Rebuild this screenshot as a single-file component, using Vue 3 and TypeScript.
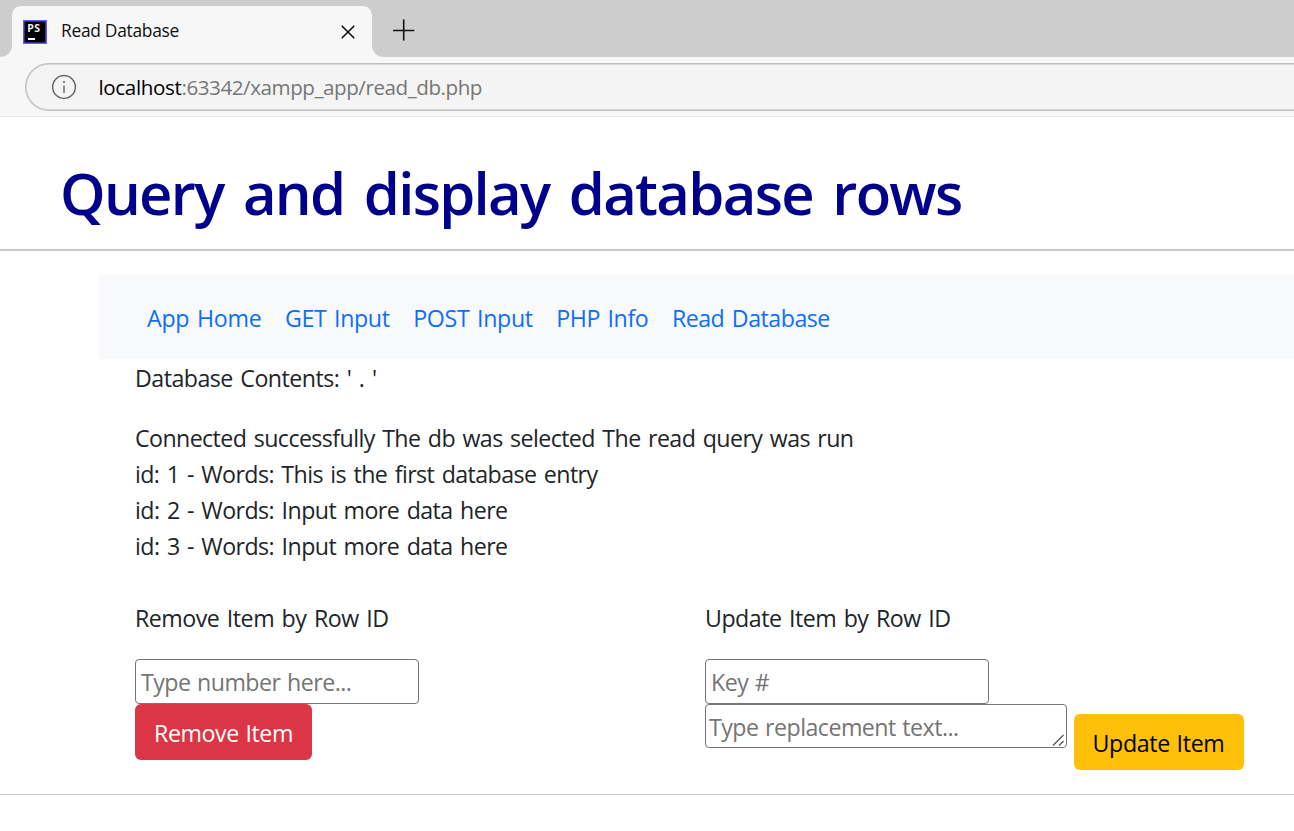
<script setup lang="ts">
import type { Directive } from 'vue'

// Spreads a line of text over a given width by adjusting its tracking.
const vFit: Directive<HTMLElement, number> = {
  mounted(el, { value }) {
    const n = (el.textContent ?? '').length
    const natural = el.getBoundingClientRect().width
    if (n > 0) el.style.letterSpacing = `${(value - natural) / n}px`
  },
}

const links = [
  { label: 'App Home', width: 114.5 },
  { label: 'GET Input', width: 104.5 },
  { label: 'POST Input', width: 119.5 },
  { label: 'PHP Info', width: 92 },
  { label: 'Read Database', width: 158 },
]

const rows = [
  { text: 'Connected successfully The db was selected The read query was run', width: 718.5 },
  { text: 'id: 1 - Words: This is the first database entry', width: 462.5 },
  { text: 'id: 2 - Words: Input more data here', width: 372.5 },
  { text: 'id: 3 - Words: Input more data here', width: 372.5 },
]
</script>

<template>
  <div class="window">
    <div class="tabs">
      <svg class="tab-shape" width="400" height="57" viewBox="0 0 400 57">
        <path d="M0 57C7 57 12 52 12 45V16C12 10 16 6 22 6H362C368 6 372 10 372 16V45C372 52 377 57 384 57Z" fill="#f7f7f7" />
      </svg>
      <svg class="favicon" width="24" height="24" viewBox="0 0 24 24">
        <rect width="24" height="24" fill="#6b57ff" />
        <rect x="1.5" y="1.5" width="21" height="21" fill="#000" />
        <text x="4.2" y="12" class="ps">P</text>
        <text x="11.2" y="12" class="ps">S</text>
        <rect x="5" y="18" width="7" height="2" fill="#fff" />
      </svg>
      <div class="tab-title"><span v-fit="118">Read Database</span></div>
      <svg class="close" width="14" height="14" viewBox="0 0 14 14">
        <path d="M1.2 1.2L12.8 12.8M12.8 1.2L1.2 12.8" stroke="#111" stroke-width="1.6" stroke-linecap="round" />
      </svg>
      <svg class="plus" width="22" height="22" viewBox="0 0 22 22">
        <path d="M10.7 1V21M.7 11.5H20.7" stroke="#111" stroke-width="1.6" stroke-linecap="round" />
      </svg>
    </div>
    <div class="toolbar">
      <div class="address">
        <svg class="info" width="26" height="26" viewBox="0 0 26 26" fill="none">
          <circle cx="13" cy="13" r="11.4" stroke="#6a6a6a" stroke-width="1.5" />
          <path d="M13 11.5V19" stroke="#6a6a6a" stroke-width="1.5" />
          <circle cx="13" cy="8" r="1.1" fill="#6a6a6a" />
        </svg>
        <div class="url"><span v-fit="83" class="host">localhost</span><span v-fit="300.5">:63342/xampp_app/read_db.php</span></div>
      </div>
    </div>
    <header>
      <h1><span v-fit="901.5">Query and display database rows</span></h1>
    </header>
    <main>
      <nav>
        <a v-for="l in links" :key="l.label"><span v-fit="l.width">{{ l.label }}</span></a>
      </nav>
      <div class="content">
        <p><span v-fit="241.5">Database Contents: ' . '</span></p>
        <div class="rows">
          <div v-for="r in rows" :key="r.text"><span v-fit="r.width">{{ r.text }}</span></div>
        </div>
        <div class="forms">
          <form class="remove">
            <p><span v-fit="253.5">Remove Item by Row ID</span></p>
            <input type="text" placeholder="Type number here..." />
            <button type="button" class="btn danger"><span v-fit="139">Remove Item</span></button>
          </form>
          <form class="update">
            <p><span v-fit="245.5">Update Item by Row ID</span></p>
            <input type="text" placeholder="Key #" />
            <div class="line">
              <div class="area">
                <textarea rows="1" placeholder="Type replacement text..."></textarea>
                <svg class="grip" width="13" height="13" viewBox="0 0 13 13">
                  <path d="M1 11.5L11.5 1M7 11.5L11.5 7" stroke="#555" stroke-width="1.3" />
                </svg>
              </div>
              <button type="button" class="btn warning"><span v-fit="132">Update Item</span></button>
            </div>
          </form>
        </div>
      </div>
    </main>
    <footer></footer>
  </div>
</template>

<style>
body {
  margin: 0;
  background: #fff;
  overflow: hidden;
}
</style>

<style scoped>
* {
  box-sizing: border-box;
}
.window {
  height: 831px;
  overflow: hidden;
  font-family: "Open Sans", "Noto Sans", sans-serif;
  font-size: 23.2px;
  line-height: 36px;
  color: #212529;
  white-space: nowrap;
}
svg {
  display: block;
  flex: none;
}
.tabs {
  position: relative;
  display: flex;
  align-items: flex-start;
  height: 57px;
  background: #cdcdcd;
}
.tab-shape {
  position: absolute;
  left: 0;
  top: 0;
}
.favicon {
  position: relative;
  margin: 20px 0 0 23px;
}
.ps {
  font: 700 10.5px "Open Sans", sans-serif;
  fill: #eee;
}
.tab-title {
  position: relative;
  width: 280px;
  margin: 18px 0 0 14px;
  font-size: 17.4px;
  line-height: 25px;
  color: #111;
}
.close {
  position: relative;
  margin-top: 25px;
}
.plus {
  margin: 19px 0 0 38px;
}
.toolbar {
  height: 60px;
  padding: 6px 0 0 25px;
  background: #f7f7f7;
  border-bottom: 1px solid #e6e6e6;
}
.address {
  display: flex;
  align-items: center;
  height: 48px;
  margin-right: -4px;
  padding-left: 25px;
  border: 1px solid #bebebe;
  border-right: 0;
  border-radius: 24px 0 0 24px;
  background: #f4f4f4;
  box-shadow: inset 0 0 0 0.5px #bebebe;
}
.url {
  margin-left: 21.5px;
  font-size: 20.6px;
  line-height: 30px;
  color: #767676;
}
.host {
  color: #000;
}
header {
  height: 134px;
  padding: 40px 0 0 60px;
  border-bottom: 2px solid #c8c8c8;
}
h1 {
  margin: 0;
  font-size: 58px;
  line-height: 72px;
  font-weight: 600;
  word-spacing: 6px;
  color: #00008b;
}
main {
  padding: 24px 0 0 99px;
  word-spacing: 2px;
}
main span {
  display: block;
  width: fit-content;
  padding-top: 2px;
  line-height: 34px;
}
nav {
  display: flex;
  gap: 23.6px;
  height: 84px;
  padding: 24px 48px;
  background: #f8f9fb;
}
nav a {
  color: #0d6efd;
}
.content {
  padding-left: 36px;
}
p {
  margin: 0 0 24px;
}
.rows {
  margin-bottom: 36px;
}
.forms {
  display: grid;
  grid-template-columns: 570px 1fr;
}
input,
textarea {
  display: block;
  margin: 0;
  border: 1px solid #767676;
  border-radius: 4px;
  background: #fff;
  font: 23.2px/36px "Open Sans", "Noto Sans", sans-serif;
  letter-spacing: -0.52px;
  word-spacing: 1px;
  outline: none;
}
input {
  width: 284px;
  height: 45px;
  padding: 3px 5px 2px;
}
textarea {
  width: 362px;
  height: 44px;
  padding: 4px 3px 2px;
  resize: none;
  overflow: hidden;
}
input::placeholder,
textarea::placeholder {
  color: #757575;
  opacity: 1;
}
.area {
  position: relative;
  height: 44px;
}
.grip {
  position: absolute;
  right: 2px;
  bottom: 1px;
}
.line {
  display: flex;
  gap: 7px;
}
.btn {
  display: block;
  height: 56px;
  padding: 0;
  border: 0;
  border-radius: 6px;
  font: 23.2px/36px "Open Sans", "Noto Sans", sans-serif;
  word-spacing: 1px;
}
.btn span {
  margin: 0 auto;
}
.danger {
  width: 177px;
  background: #dc3545;
  color: #fff;
}
.warning {
  width: 170px;
  padding-right: 1px;
  margin-top: 10px;
  background: #ffc107;
  color: #000;
}
footer {
  margin-top: 24px;
  border-top: 1px solid #c8c8c8;
}
</style>
